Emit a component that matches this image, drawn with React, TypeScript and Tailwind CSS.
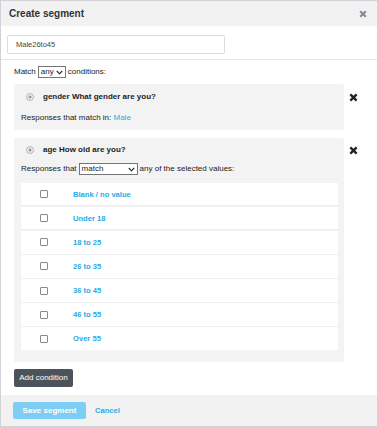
import React from "react";

const ages = [
  "Blank / no value",
  "Under 18",
  "18 to 25",
  "26 to 35",
  "36 to 45",
  "46 to 55",
  "Over 55",
];

function CloseIcon({ size, color }: { size: number; color: string }) {
  return (
    <svg width={size} height={size} viewBox="0 0 10 10">
      <path d="M1.5 1.5 L8.5 8.5 M8.5 1.5 L1.5 8.5" stroke={color} strokeWidth="2.6" strokeLinecap="butt" />
    </svg>
  );
}

function Radio() {
  return (
    <svg width="8" height="8" viewBox="0 0 8 8">
      <circle cx="4" cy="4" r="3.4" fill="#fff" stroke="#a3a3a3" strokeWidth="0.9" />
      <circle cx="4" cy="4" r="1.7" fill="#9d9d9d" />
    </svg>
  );
}

function Chevron() {
  return (
    <svg width="7" height="5" viewBox="0 0 7 5">
      <path d="M0.8 1 L3.5 3.8 L6.2 1" stroke="#222" strokeWidth="1.1" fill="none" />
    </svg>
  );
}

function Select({ value, width }: { value: string; width: string }) {
  return (
    <div
      className={`flex h-[12px] items-center justify-between border border-[#767676] bg-white pl-[2px] pr-[2px] text-[8px] leading-none text-[#222] ${width}`}
    >
      <span>{value}</span>
      <Chevron />
    </div>
  );
}

export default function App() {
  return (
    <div className="flex h-[427px] w-[378px] flex-col border border-[#d2d2d8] bg-white font-['Liberation_Sans',Arial,sans-serif] text-[#222]">
      <div className="flex h-[25px] items-center justify-between bg-[#f2f2f2] pl-[8px] pr-[10px]">
        <span className="text-[10px] font-bold text-[#333]">Create segment</span>
        <CloseIcon size={8} color="#808a98" />
      </div>

      <div className="mt-[9px] ml-[6px] flex h-[19px] w-[218px] items-center rounded-[2px] border border-[#dcdcdc] pl-[8px] text-[7.5px] text-[#444]">
        Male26to45
      </div>

      <div className="mt-[5px] h-px bg-[#e6e6e6]" />

      <div className="mt-[6px] ml-[13px] flex h-[12px] items-center gap-[2px] text-[8px]">
        <span>Match</span>
        <Select value="any" width="w-[28px]" />
        <span>conditions:</span>
      </div>

      <div className="mt-[6px] ml-[13px] flex items-start">
        <div className="h-[46px] w-[330px] rounded-[3px] bg-[#f3f3f3]">
          <div className="flex h-[25px] items-center pl-[12px]">
            <Radio />
            <span className="ml-[9px] text-[8px] font-bold">gender What gender are you?</span>
          </div>
          <div className="pl-[7px] pt-[3px] text-[8px]">
            Responses that match in: <span className="text-[#29aae8]">Male</span>
          </div>
        </div>
        <div className="ml-[5px] mt-[9px]">
          <CloseIcon size={9} color="#222" />
        </div>
      </div>

      <div className="mt-[8px] ml-[13px] flex items-start">
        <div className="w-[330px] rounded-[3px] bg-[#f3f3f3] pb-[12px]">
          <div className="flex h-[24px] items-center pl-[12px]">
            <Radio />
            <span className="ml-[9px] text-[8px] font-bold">age How old are you?</span>
          </div>
          <div className="flex h-[14px] items-center gap-[2px] pl-[7px] text-[8px]">
            <span>Responses that</span>
            <Select value="match" width="w-[59px]" />
            <span>any of the selected values:</span>
          </div>
          <div className="mt-[7px] ml-[7px] w-[317px] bg-[#efefef]">
            {ages.map((a, i) => (
              <div
                key={a}
                className={`flex h-[22.4px] items-center bg-white ${i > 0 ? "mt-[1.7px]" : ""}`}
              >
                <div className="ml-[19px] h-[8px] w-[8px] rounded-[1px] border border-[#8a8a8a] bg-white" />
                <span className="ml-[25px] text-[7.6px] font-bold text-[#29aae8]">{a}</span>
              </div>
            ))}
          </div>
        </div>
        <div className="ml-[5px] mt-[8px]">
          <CloseIcon size={9} color="#222" />
        </div>
      </div>

      <div className="mt-[7px] ml-[13px] flex h-[18px] w-[59px] items-center justify-center rounded-[2px] bg-[#4c535b] text-[8px] text-white">
        Add condition
      </div>

      <div className="mt-auto flex h-[31px] items-center bg-[#f2f2f2] pl-[12px]">
        <div className="flex h-[17px] w-[73px] items-center justify-center rounded-[2px] bg-[#7dcdf5] text-[8px] font-bold text-white">
          Save segment
        </div>
        <span className="ml-[9px] text-[7.6px] font-bold text-[#29aae8]">Cancel</span>
      </div>
    </div>
  );
}
